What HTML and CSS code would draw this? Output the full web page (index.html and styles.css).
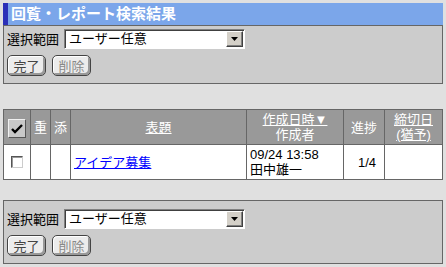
FILE: index.html
```html
<!DOCTYPE html>
<html lang="ja">
<head>
<meta charset="UTF-8">
<title>回覧・レポート検索結果</title>
<link rel="stylesheet" href="styles.css">
</head>
<body>
  <h1 class="title">回覧・レポート検索結果</h1>
  <div class="panel">
    <div class="range">
      <span class="range-label">選択範囲</span>
      <div class="select">
        <span class="select-text">ユーザー任意</span>
        <span class="select-btn"><svg width="7" height="4" viewBox="0 0 7 4"><path d="M0 0h7L3.5 4z" fill="#000"/></svg></span>
      </div>
    </div>
    <div class="buttons">
      <button class="btn">完了</button>
      <button class="btn btn-off">削除</button>
    </div>
  </div>

  <table class="list">
    <colgroup>
      <col style="width:27px"><col style="width:20px"><col style="width:20px"><col style="width:176px"><col style="width:97px"><col style="width:41px"><col>
    </colgroup>
    <thead>
      <tr>
        <th class="c-check"><span class="allcheck"><svg width="12" height="10" viewBox="0 0 12 10"><path d="M1 5l3 3 7-7" fill="none" stroke="#000" stroke-width="2.4"/></svg></span></th>
        <th class="c-small">重</th>
        <th class="c-small">添</th>
        <th><a href="#">表題</a></th>
        <th><a href="#">作成日時▼</a><br>作成者</th>
        <th>進捗</th>
        <th><a href="#">締切日<br>(猶予)</a></th>
      </tr>
    </thead>
    <tbody>
      <tr>
        <td class="c-check"><span class="checkbox"></span></td>
        <td></td>
        <td></td>
        <td><a class="subject" href="#">アイデア募集</a></td>
        <td>09/24 13:58<br>田中雄一</td>
        <td class="c-progress">1/4</td>
        <td></td>
      </tr>
    </tbody>
  </table>

  <div class="panel panel-bottom">
    <div class="range">
      <span class="range-label">選択範囲</span>
      <div class="select">
        <span class="select-text">ユーザー任意</span>
        <span class="select-btn"><svg width="7" height="4" viewBox="0 0 7 4"><path d="M0 0h7L3.5 4z" fill="#000"/></svg></span>
      </div>
    </div>
    <div class="buttons">
      <button class="btn">完了</button>
      <button class="btn btn-off">削除</button>
    </div>
  </div>
</body>
</html>
```

FILE: styles.css
```css
* {
  margin: 0;
  padding: 0;
  box-sizing: border-box;
}

body {
  margin: 3px;
  background-color: #e0e0e0;
  font-family: "Liberation Sans", "Noto Sans CJK JP", sans-serif;
  font-size: 13px;
  line-height: 15px;
  color: #000;
}

.title {
  height: 22px;
  background-color: #7ba6ea;
  border-left: 5px solid #2b30b8;
  padding-left: 3px;
  color: #fff;
  font-size: 15px;
  font-weight: bold;
  line-height: 22px;
}

.panel {
  background-color: #cccccc;
  border: 1px solid #666;
  padding: 3px 3px 7px;
}

.panel-bottom {
  margin-top: 20px;
  padding-top: 8px;
}

.range {
  display: flex;
  align-items: center;
  gap: 5px;
  height: 20px;
}

.select {
  display: flex;
  width: 181px;
  height: 20px;
  background-color: #fff;
  border: 1px solid;
  border-color: #808080 #fff #fff #808080;
  box-shadow: inset 1px 1px 0 #404040;
  padding: 1px 1px 1px 2px;
}

.select-text {
  flex: 1;
  line-height: 16px;
  padding-left: 2px;
}

.select-btn {
  width: 17px;
  height: 16px;
  display: flex;
  align-items: center;
  justify-content: center;
  background-color: #d4d0c8;
  border: 1px solid;
  border-color: #fff #404040 #404040 #fff;
  box-shadow: inset -1px -1px 0 #808080;
}

.buttons {
  display: flex;
  gap: 6px;
  margin-top: 6px;
}

.btn {
  width: 39px;
  height: 21px;
  font-family: inherit;
  font-size: 13px;
  color: #444;
  background-color: #ececec;
  border: 1px solid #444;
  border-radius: 5px;
  box-shadow: inset 1px 1px 0 #fff, inset -2px -2px 0 #999;
}

.btn-off {
  color: #888;
}

.list {
  width: 440px;
  margin-top: 25px;
  border-collapse: collapse;
  table-layout: fixed;
  background-color: #fff;
}

.list th,
.list td {
  border: 1px solid #666;
  padding: 2px 3px;
  vertical-align: middle;
}

.list th {
  height: 35px;
  background-color: #999;
  color: #fff;
  font-weight: normal;
  text-align: center;
}

.list td {
  height: 35px;
  text-align: left;
}

.list th a {
  color: #fff;
}

.list .c-small {
  padding: 0;
}

.list .c-check {
  padding: 0;
  text-align: center;
}

.allcheck {
  display: inline-flex;
  align-items: center;
  justify-content: center;
  width: 18px;
  height: 19px;
  margin-top: 3px;
  background-color: #c8c8c8;
  border: 1px solid;
  border-color: #f0f0f0 #555 #555 #f0f0f0;
}

.checkbox {
  display: inline-block;
  width: 12px;
  height: 12px;
  margin-top: 3px;
  background-color: #fff;
  border: 1px solid;
  border-color: #555 #ccc #ccc #555;
  box-shadow: inset 1px 1px 0 #999;
}

.subject {
  color: #0000ff;
}

.list .c-progress {
  text-align: right;
  padding-right: 8px;
}
```
